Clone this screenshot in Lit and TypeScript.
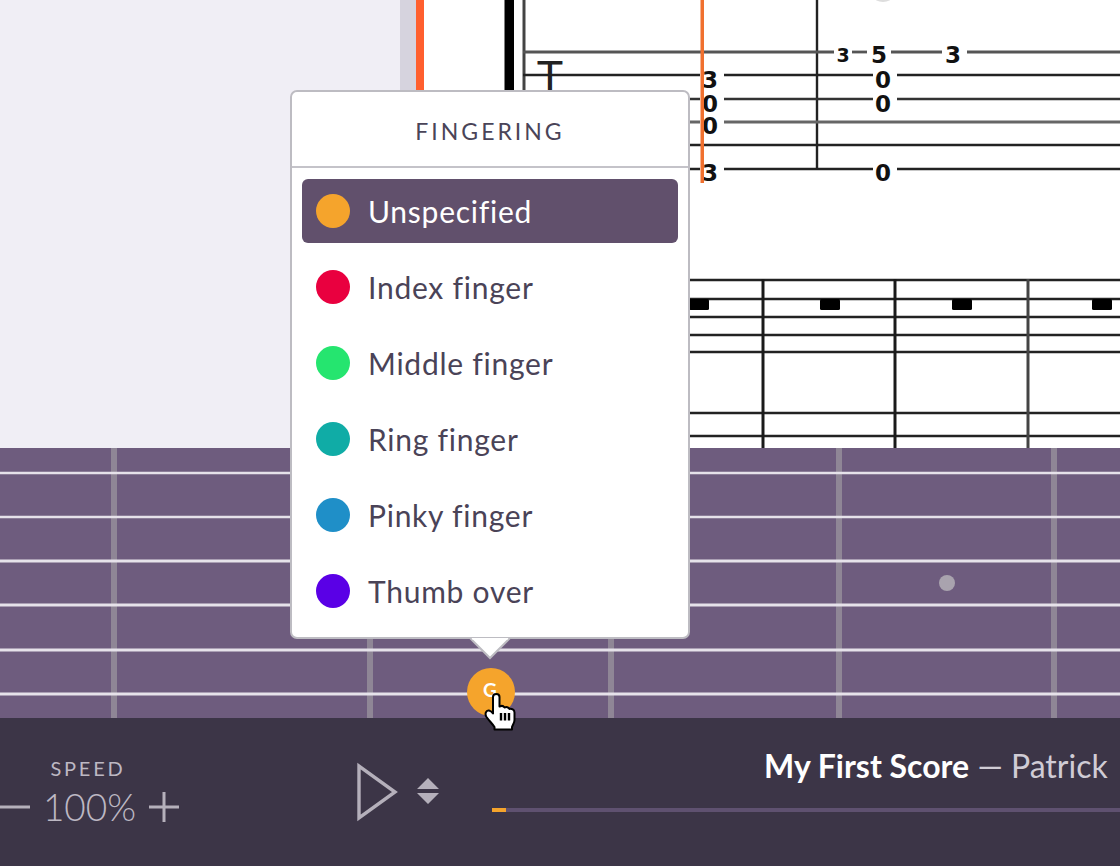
import { LitElement, html, svg, css } from 'lit';
import { customElement } from 'lit/decorators.js';

const FINGERS = [
  { label: 'Unspecified', color: '#f5a42c', selected: true },
  { label: 'Index finger', color: '#e9003f' },
  { label: 'Middle finger', color: '#25e56f' },
  { label: 'Ring finger', color: '#10aca6' },
  { label: 'Pinky finger', color: '#1f8fc8' },
  { label: 'Thumb over', color: '#5a00e6' },
];

// tab staff: [y, stroke, width, segments of x]
const TAB_LINES: [number, string, number, [number, number][]][] = [
  [52, '#555', 2.8, [[523, 834], [852, 867], [891, 942], [967, 1120]]],
  [75, '#222', 2.4, [[523, 700], [724, 873], [897, 1120]]],
  [99, '#333', 2.4, [[523, 700], [724, 873], [897, 1120]]],
  [122, '#666', 3.2, [[523, 700], [724, 1120]]],
  [145, '#222', 2.4, [[523, 1120]]],
  [169, '#222', 2.4, [[523, 700], [724, 873], [897, 1120]]],
];

const TAB_NOTES: [number, number, string, boolean?][] = [
  [843, 62, '3', true],
  [879, 63, '5'],
  [953, 63, '3'],
  [710, 88, '3'],
  [710, 112, '0'],
  [710, 134, '0'],
  [710, 181, '3'],
  [883, 88, '0'],
  [883, 112, '0'],
  [883, 181, '0'],
];

const STAFF_LINES = [280, 299, 317, 335, 352, 413, 436];
const STAFF_BARS = [763, 895, 1028];
const RESTS = [689, 820, 952, 1092];

const STRINGS: [number, number][] = [[473, 2.4], [517, 2.4], [561, 2.8], [605, 3], [650, 3], [694, 3.2]];
const FRETS = [114, 370, 611, 839, 1054];

@customElement('app-root')
export class AppRoot extends LitElement {
  static styles = css`
    :host {
      display: block;
      width: 1120px;
      height: 866px;
      overflow: hidden;
      position: relative;
      font-family: 'Lato', 'Open Sans', sans-serif;
      background: #3c3547;
    }

    /* ── Score area ────────────────────────────────────────── */
    .top {
      display: flex;
      height: 448px;
      background: #fff;
    }
    .side { width: 400px; background: #f0eef5; }
    .gutter { width: 16px; background: #d6d3de; }
    .accent { width: 8px; background: #ff5f2e; }
    .score { display: block; width: 696px; height: 448px; }
    .note {
      font-family: 'DejaVu Sans', sans-serif;
      font-weight: 700;
      font-size: 23px;
      text-anchor: middle;
      fill: #111;
    }
    .note.small { font-size: 19px; }
    .clef {
      font-family: 'Liberation Sans', sans-serif;
      font-size: 44px;
      text-anchor: middle;
      fill: #222;
    }

    /* ── Fretboard ─────────────────────────────────────────── */
    .board { display: block; width: 1120px; height: 270px; background: #6e5c7e; }

    /* ── Popover ───────────────────────────────────────────── */
    .popover {
      position: absolute;
      left: 290px;
      top: 90px;
      width: 400px;
      height: 549px;
      box-sizing: border-box;
      background: #fff;
      border: 2px solid #bdbcc2;
      border-radius: 7px;
      color: #4a4357;
    }
    .popover-title {
      height: 76px;
      box-sizing: border-box;
      padding-top: 4px;
      display: flex;
      align-items: center;
      justify-content: center;
      border-bottom: 2px solid #c4c3c9;
      font-size: 23px;
      letter-spacing: 3px;
      color: #4a4458;
    }
    .rows {
      display: flex;
      flex-direction: column;
      gap: 12px;
      padding: 11px 10px;
    }
    .row {
      height: 64px;
      display: flex;
      align-items: center;
      gap: 18px;
      padding: 0 14px;
      border-radius: 6px;
      font-size: 30px;
      letter-spacing: 0.75px;
    }
    .row.selected { background: #61506c; color: #fff; }
    .dot { width: 34px; height: 34px; border-radius: 50%; flex: none; }
    .arrow {
      position: absolute;
      left: 468px;
      top: 638px;
      width: 44px;
      height: 23px;
      display: block;
    }

    /* ── Active note marker ────────────────────────────────── */
    .marker {
      position: absolute;
      left: 467px;
      top: 668px;
      width: 48px;
      height: 48px;
      border-radius: 50%;
      background: #f5a42c;
      color: #fff;
      font-size: 19px;
      font-weight: 700;
      display: flex;
      align-items: center;
      justify-content: center;
      padding: 0 2px 5px 0;
      box-sizing: border-box;
    }
    .cursor {
      position: absolute;
      left: 484px;
      top: 692px;
      width: 32px;
      height: 39px;
      display: block;
    }

    /* ── Transport bar ─────────────────────────────────────── */
    .bar {
      height: 148px;
      display: flex;
      align-items: flex-start;
      background: #3c3547;
      color: #bdb8c3;
    }
    .speed {
      width: 180px;
      flex: none;
      display: flex;
      flex-direction: column;
      align-items: center;
      margin-left: -2px;
      padding-top: 38px;
    }
    .speed-label { font-size: 20px; letter-spacing: 2.8px; line-height: 24px; }
    .speed-row {
      display: flex;
      align-items: center;
      gap: 13px;
      line-height: 50px;
      font-size: 37px;
      font-weight: 300;
      margin: 2px 0 0 3px;
    }
    .stepper { display: block; width: 30px; height: 30px; }
    .controls {
      flex: none;
      display: flex;
      align-items: center;
      gap: 17px;
      margin-left: 179px;
      padding-top: 44px;
    }
    .play { display: block; width: 42px; height: 60px; }
    .updown { display: block; width: 24px; height: 28px; }
    .track { flex: 1; padding-top: 28px; margin-left: 52px; min-width: 0; }
    .title {
      font-size: 32px;
      line-height: 40px;
      white-space: nowrap;
      padding-left: 272px;
      color: #d0ccd5;
    }
    .title b { color: #fff; font-weight: 700; }
    .progress {
      height: 4px;
      margin-top: 22px;
      background: #5f5170;
    }
    .progress div { width: 14px; height: 100%; background: #f5a42c; }
  `;

  private renderScore() {
    return html`
      <svg class="score" viewBox="424 0 696 448">
        <rect x="504.5" y="0" width="9.5" height="120" fill="#000"></rect>
        <line x1="524" y1="0" x2="524" y2="169" stroke="#444" stroke-width="3"></line>
        <line x1="817" y1="0" x2="817" y2="169" stroke="#222" stroke-width="2.4"></line>
        <ellipse cx="883" cy="-3" rx="9" ry="5" fill="#ddd"></ellipse>
        ${TAB_LINES.map(([y, stroke, width, segments]) => segments.map(([x1, x2]) => svg`
          <line x1=${x1} y1=${y} x2=${x2} y2=${y} stroke=${stroke} stroke-width=${width}></line>
        `))}
        <text class="clef" x="550" y="92">T</text>
        ${TAB_NOTES.map(([x, y, digit, small]) => svg`
          <text class="note ${small ? 'small' : ''}" x=${x} y=${y}>${digit}</text>
        `)}
        <rect x="700.5" y="0" width="3.5" height="183" fill="#f0702f"></rect>
        ${STAFF_LINES.map((y) => svg`
          <line x1="680" y1=${y} x2="1120" y2=${y} stroke="#222" stroke-width="2.4"></line>
        `)}
        ${STAFF_BARS.map((x, i) => svg`
          <line x1=${x} y1="279" x2=${x} y2="448" stroke=${i === 2 ? '#444' : '#1a1a1a'} stroke-width="3"></line>
        `)}
        ${RESTS.map((x) => svg`
          <rect x=${x} y="299" width="20" height="11" rx="1.5" fill="#000"></rect>
        `)}
      </svg>
    `;
  }

  private renderBoard() {
    return html`
      <svg class="board" viewBox="0 448 1120 270">
        ${FRETS.map((x) => svg`
          <rect x=${x - 3} y="448" width="6" height="270" fill="#8f8696"></rect>
        `)}
        ${STRINGS.map(([y, width]) => svg`
          <line x1="0" y1=${y} x2="1120" y2=${y} stroke="#e6e2ea" stroke-width=${width}></line>
        `)}
        <circle cx="947" cy="583" r="8" fill="#a9a3ae"></circle>
      </svg>
    `;
  }

  private renderPopover() {
    return html`
      <div class="popover">
        <div class="popover-title">FINGERING</div>
        <div class="rows">
          ${FINGERS.map((f) => html`
            <div class="row ${f.selected ? 'selected' : ''}">
              <span class="dot" style="background:${f.color}"></span>
              <span>${f.label}</span>
            </div>
          `)}
        </div>
      </div>
      <svg class="arrow" viewBox="0 0 44 23">
        <path d="M2 0 L22 20 L42 0" fill="#fff" stroke="#bdbcc2" stroke-width="2"></path>
        <rect x="4" y="0" width="36" height="1.5" fill="#fff"></rect>
      </svg>
    `;
  }

  private renderCursor() {
    return html`
      <svg class="cursor" viewBox="0 0 32 39">
        <path
          d="M9 5 C9 1 15.5 1 15.5 5 L15.5 14.5 C17.5 13.5 19.5 14 20.5 15.5 C22.5 14.5 24.5 15.5 25.5 17 C27.5 16.5 30.5 17.5 30.5 20.5 L30.5 28 C30.5 31 28.5 33 28 35 L28 37.5 L10.5 37.5 L10.5 35 C8.5 32 5 28.5 2.5 25 C0.5 22 2 18 5 18.5 C6.5 18.8 8 20 9 21.5 Z"
          fill="#fff"
          stroke="#000"
          stroke-width="2"
          stroke-linejoin="round"
        ></path>
        <path d="M17 21 V28.5 M21 21 V28.5 M25 21 V28.5" stroke="#000" stroke-width="2.4" fill="none"></path>
      </svg>
    `;
  }

  private renderBar() {
    return html`
      <div class="bar">
        <div class="speed">
          <div class="speed-label">SPEED</div>
          <div class="speed-row">
            <svg class="stepper" viewBox="0 0 30 30">
              <path d="M0 15 H30" stroke="#b5b0bb" stroke-width="3"></path>
            </svg>
            <span>100%</span>
            <svg class="stepper" viewBox="0 0 30 30">
              <path d="M0 15 H30 M15 0 V30" stroke="#b5b0bb" stroke-width="3"></path>
            </svg>
          </div>
        </div>
        <div class="controls">
          <svg class="play" viewBox="0 0 42 60">
            <path d="M2 4 V56 L38 30 Z" fill="none" stroke="#b5b0bb" stroke-width="3.4"></path>
          </svg>
          <svg class="updown" viewBox="0 0 24 28">
            <path d="M12 0 L23 11 H1 Z M1 15 H23 L12 26 Z" fill="#b5b0bb"></path>
          </svg>
        </div>
        <div class="track">
          <div class="title"><b>My First Score</b> — Patrick</div>
          <div class="progress"><div></div></div>
        </div>
      </div>
    `;
  }

  render() {
    return html`
      <div class="top">
        <div class="side"></div>
        <div class="gutter"></div>
        <div class="accent"></div>
        ${this.renderScore()}
      </div>
      ${this.renderBoard()}
      ${this.renderBar()}
      ${this.renderPopover()}
      <div class="marker">G</div>
      ${this.renderCursor()}
    `;
  }
}

declare global {
  interface HTMLElementTagNameMap { 'app-root': AppRoot; }
}
